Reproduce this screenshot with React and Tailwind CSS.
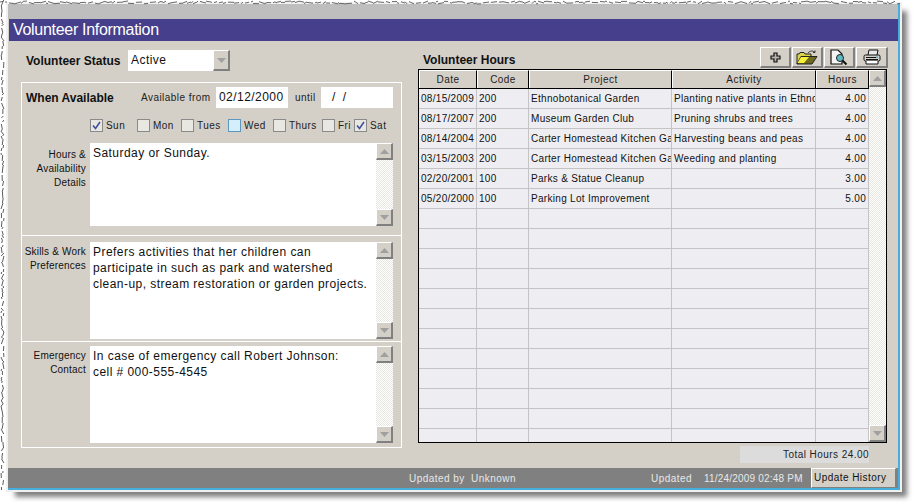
import React from "react";

function jag(len, seed, horizontal) {
  let s = seed, d = "", p = 0;
  const r = () => (s = (s * 9301 + 49297) % 233280) / 233280;
  while (p < len) {
    const a = p, w = 2 + Math.floor(r() * 5), o = 1 + r() * 3, o2 = 1 + r() * 3;
    d += horizontal ? `M${a} ${o.toFixed(1)}L${a + w} ${o2.toFixed(1)}` : `M${o.toFixed(1)} ${a}L${o2.toFixed(1)} ${a + w}`;
    p += w + (r() > 0.7 ? 2 : 0);
  }
  return d;
}

function Arrow({ up }) {
  return (
    <svg width="9" height="5" viewBox="0 0 9 5">
      <path d={up ? "M4.5 0L9 5H0Z" : "M0 0H9L4.5 5Z"} fill="#a0a0a0" />
    </svg>
  );
}

function ScrollBtn({ up }) {
  return (
    <div className="w-[17px] h-[17px] shrink-0 flex items-center justify-center bg-[#d4d0c8] border-t border-l border-t-white border-l-white border-r-2 border-b-2 border-r-[#808080] border-b-[#808080]">
      <Arrow up={up} />
    </div>
  );
}

function Scrollbar() {
  return (
    <div className="w-[17px] h-full shrink-0 flex flex-col justify-between bg-[repeating-conic-gradient(#ffffff_0_25%,#e8e6e0_0_50%)] bg-[length:2px_2px]">
      <ScrollBtn up />
      <ScrollBtn />
    </div>
  );
}

function Memo({ h, lines }) {
  return (
    <div className={`w-[303px] ${h} bg-white flex justify-between`}>
      <div className="pl-[3px] pt-[2px] text-[12px] leading-[16px] tracking-[0.45px] text-[#111] whitespace-nowrap">
        {lines.map((l) => (
          <div key={l}>{l}</div>
        ))}
      </div>
      <Scrollbar />
    </div>
  );
}

function Label({ lines, pt }) {
  return (
    <div className={`w-[62px] mr-[4px] ${pt} text-right text-[10px] leading-[14px] tracking-[0.2px] text-[#111] whitespace-nowrap`}>
      {lines.map((l) => (
        <div key={l}>{l}</div>
      ))}
    </div>
  );
}

function Check({ label, checked, hot, w }) {
  return (
    <div className={`flex items-center ${w}`}>
      <div className={`w-[13px] h-[13px] mr-[3px] flex items-center justify-center border ${hot ? "border-[#5e97bd] bg-[#d5eefc]" : "border-[#8a8a8a] bg-[#e9e7e2]"}`}>
        {checked && (
          <svg width="9" height="9" viewBox="0 0 9 9">
            <path d="M1 4.5L3.5 7.5L8 1" fill="none" stroke="#3f4f9a" strokeWidth="1.6" />
          </svg>
        )}
      </div>
      <span className="text-[10px] tracking-[0.45px] text-[#222]">{label}</span>
    </div>
  );
}

function ToolBtn({ w, children }) {
  return (
    <div className={`${w} h-[21px] flex items-center justify-center bg-[#d4d0c8] border-t border-l border-t-white border-l-white border-r-2 border-b-2 border-r-[#808080] border-b-[#808080]`}>
      {children}
    </div>
  );
}

const rows = [
  ["08/15/2009", "200", "Ethnobotanical Garden", "Planting native plants in Ethno", "4.00"],
  ["08/17/2007", "200", "Museum Garden Club", "Pruning shrubs and trees", "4.00"],
  ["08/14/2004", "200", "Carter Homestead Kitchen Ga", "Harvesting beans and peas", "4.00"],
  ["03/15/2003", "200", "Carter Homestead Kitchen Ga", "Weeding and planting", "4.00"],
  ["02/20/2001", "100", "Parks & Statue Cleanup", "", "3.00"],
  ["05/20/2000", "100", "Parking Lot Improvement", "", "5.00"],
  ...Array.from({ length: 12 }, () => ["", "", "", "", ""]),
];

const cols = ["w-[58px]", "w-[52px]", "w-[143px]", "w-[144px]", "w-[53px]"];
const heads = ["Date", "Code", "Project", "Activity", "Hours"];

export default function App() {
  return (
    <div className="relative w-[914px] h-[502px] bg-white overflow-hidden font-['Liberation_Sans',Arial,sans-serif]">
      <div className="ml-[8px] pt-[4px] w-[892px]">
        <div className="w-[892px] h-[486px] flex flex-col border-r-2 border-b-2 border-r-[#45aedb] border-b-[#45aedb] shadow-[0_0_0_2px_#f0f0f0,7px_7px_5px_0px_rgba(60,60,60,0.65)] bg-[#d4d0c8]">
          <div className="h-[15px] bg-[#bebebe] shrink-0" />
          <div className="h-[22px] bg-[#463f8b] shrink-0 ml-[1px] pl-[4px] text-white text-[16px] leading-[22px] tracking-[-0.3px] whitespace-nowrap">
            Volunteer Information
          </div>

          <div className="flex-1 flex pl-[13px]">
            <div className="w-[381px] pt-[9px]">
              <div className="h-[21px] flex items-center pl-[5px]">
                <div className="w-[102px] font-bold text-[12px] text-[#111] whitespace-nowrap">Volunteer Status</div>
                <div className="w-[85px] h-[21px] bg-white pl-[3px] text-[12px] leading-[21px] tracking-[0.45px] text-[#111]">Active</div>
                <div className="h-[21px] w-[17px] flex items-center justify-center bg-[#d4d0c8] border-t border-l border-t-white border-l-white border-r-2 border-b-2 border-r-[#808080] border-b-[#808080]"><Arrow /></div>
              </div>

              <div className="mt-[11px] w-[381px] border border-white">
                <div className="h-[153px] border-b border-white pl-[4px] pt-[4px]">
                  <div className="flex items-center h-[21px]">
                    <div className="w-[115px] font-bold text-[12px] text-[#111] whitespace-nowrap">When Available</div>
                    <div className="w-[75px] text-[10px] tracking-[0.45px] text-[#222] whitespace-nowrap">Available from</div>
                    <div className="w-[72px] h-[21px] bg-white pl-[3px] text-[12px] leading-[21px] tracking-[0.45px] text-[#111]">02/12/2000</div>
                    <div className="w-[33px] pl-[7px] text-[10px] tracking-[0.45px] text-[#222]">until</div>
                    <div className="w-[72px] h-[21px] bg-white pl-[11px] text-[12px] leading-[21px] tracking-[2px] text-[#111]">/ /</div>
                  </div>
                  <div className="flex mt-[11px] ml-[64px] h-[13px]">
                    <Check label="Sun" checked w="w-[47px]" />
                    <Check label="Mon" w="w-[44px]" />
                    <Check label="Tues" w="w-[47px]" />
                    <Check label="Wed" hot w="w-[45px]" />
                    <Check label="Thurs" w="w-[49px]" />
                    <Check label="Fri" w="w-[32px]" />
                    <Check label="Sat" checked w="w-[39px]" />
                  </div>
                  <div className="flex mt-[11px] -ml-[2px]">
                    <Label pt="pt-[5px]" lines={["Hours &", "Availability", "Details"]} />
                    <Memo h="h-[83px]" lines={["Saturday or Sunday."]} />
                  </div>
                </div>

                <div className="h-[106px] border-b border-white pl-[2px] pt-[6px] flex">
                  <Label pt="pt-[3px]" lines={["Skills & Work", "Preferences"]} />
                  <Memo h="h-[97px]" lines={["Prefers activities that her children can", "participate in such as park and watershed", "clean-up, stream restoration or garden projects."]} />
                </div>

                <div className="h-[105px] pl-[2px] pt-[4px] flex">
                  <Label pt="pt-[3px]" lines={["Emergency", "Contact"]} />
                  <Memo h="h-[97px]" lines={["In case of emergency call Robert Johnson:", "cell # 000-555-4545"]} />
                </div>
              </div>
            </div>

            <div className="ml-[16px] w-[470px] pt-[6px]">
              <div className="h-[22px] flex items-end justify-between">
                <div className="ml-[5px] font-bold text-[12px] text-[#111] whitespace-nowrap">Volunteer Hours</div>
                <div className="flex gap-[1px] items-start h-[22px]">
                  <ToolBtn w="w-[31px]">
                    <svg width="11" height="11" viewBox="0 0 11 11"><path d="M4 1H7V4H10V7H7V10H4V7H1V4H4Z" fill="#b5b1a8" stroke="#111" strokeWidth="1.2" /></svg>
                  </ToolBtn>
                  <ToolBtn w="w-[31px]">
                    <svg width="22" height="15" viewBox="0 0 22 15">
                      <path d="M1 14V4H3L4 2.5H8L9 4H15V6" fill="#d8d44a" stroke="#222" strokeWidth="1" />
                      <path d="M1 14L5 6.5H21L16 14Z" fill="#6e6a1e" stroke="#222" strokeWidth="1" />
                      <path d="M1.5 13L5 7H13L8 13Z" fill="#f6f03a" />
                      <path d="M12 3C14 0.5 17 0.5 19 2.5M19 2.5V0.5M19 2.5H17" fill="none" stroke="#333" strokeWidth="1" />
                    </svg>
                  </ToolBtn>
                  <ToolBtn w="w-[31px]">
                    <svg width="20" height="17" viewBox="0 0 20 17">
                      <path d="M2 1H9L13 5V15H2Z" fill="#f4f4f4" stroke="#111" strokeWidth="1.2" />
                      <circle cx="11" cy="9" r="3.5" fill="#5fbcc6" stroke="#222" strokeWidth="1" />
                      <path d="M13.5 11.5L17.5 15.5" stroke="#111" strokeWidth="2" />
                    </svg>
                  </ToolBtn>
                  <ToolBtn w="w-[32px]">
                    <svg width="18" height="16" viewBox="0 0 18 16">
                      <path d="M5 6L6 1H15L14 6" fill="#e8e8e8" stroke="#111" strokeWidth="1" />
                      <rect x="1" y="6" width="16" height="6" rx="1.5" fill="#d4d0c8" stroke="#111" strokeWidth="1" />
                      <path d="M3 12V15H15V12M3 8.5H14M3 10.5H15" fill="#fff" stroke="#111" strokeWidth="1" />
                      <rect x="13" y="7.5" width="2" height="1.5" fill="#46b2d8" />
                    </svg>
                  </ToolBtn>
                </div>
              </div>

              <div className="w-[469px] h-[374px] border border-black flex bg-[repeating-conic-gradient(#ffffff_0_25%,#e8e6e0_0_50%)] bg-[length:2px_2px]">
                <div className="w-[450px] h-full overflow-hidden bg-[#eeeef2] shrink-0">
                  <div className="flex h-[19px] border-b border-black bg-[#d4d0c8]">
                    {heads.map((h, i) => (
                      <div key={h} className={`${cols[i]} h-[18px] text-center text-[10px] leading-[18px] tracking-[0.45px] text-[#222] border-t border-l border-t-white border-l-white border-r border-r-black`}>
                        {h}
                      </div>
                    ))}
                  </div>
                  {rows.map((r, ri) => (
                    <div key={ri} className="flex h-[20px] border-b border-[#c4c4c4]">
                      {r.map((c, i) => (
                        <div key={i} className={`${cols[i]} h-[19px] overflow-hidden whitespace-nowrap border-r border-[#c4c4c4] text-[10px] leading-[19px] tracking-[0.3px] text-[#111] ${i === 4 ? "text-right pr-[2px]" : "pl-[2px]"}`}>
                          {c}
                        </div>
                      ))}
                    </div>
                  ))}
                </div>
                <Scrollbar />
              </div>

              <div className="w-[451px] flex justify-end">
                <div className="mt-[3px] w-[129px] h-[17px] bg-[#dcdcdc] text-right text-[10px] leading-[17px] tracking-[0.45px] text-[#222]">
                  Total Hours 24.00
                </div>
              </div>
            </div>
          </div>

          <div className="h-[20px] bg-[#808080] shrink-0 flex items-center text-[10px] tracking-[0.45px] text-[#e8e8e8] whitespace-nowrap">
            <div className="ml-[401px] w-[242px]">Updated by&nbsp;&nbsp;Unknown</div>
            <div className="w-[53px]">Updated</div>
            <div className="w-[107px] tracking-[0.2px]">11/24/2009 02:48 PM</div>
            <div className="w-[85px] h-[20px] bg-[#d4d0c8] border-t border-l border-t-white border-l-white border-r border-b border-r-[#808080] border-b-[#808080] pl-[2px] text-[10px] leading-[18px] text-[#111]">
              Update History
            </div>
          </div>
        </div>
      </div>
      <svg className="absolute left-0 top-0" width="8" height="490">
        <path d={jag(490, 17, false)} stroke="#333" strokeWidth="0.8" fill="none" />
      </svg>
      <svg className="absolute left-0 top-0" width="900" height="5">
        <path d={jag(900, 51, true)} stroke="#444" strokeWidth="0.8" fill="none" />
      </svg>
    </div>
  );
}
